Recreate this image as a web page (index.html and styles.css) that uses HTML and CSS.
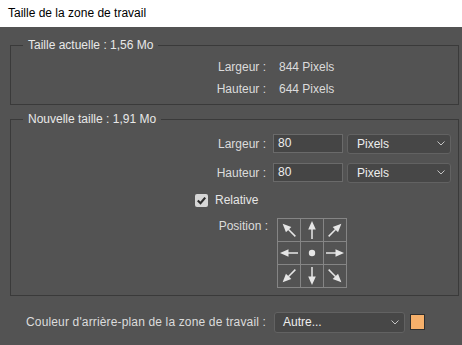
FILE: index.html
```html
<!DOCTYPE html>
<html lang="fr">
<head>
<meta charset="utf-8">
<title>Taille de la zone de travail</title>
<link rel="stylesheet" href="styles.css">
</head>
<body>
<div class="titlebar">Taille de la zone de travail</div>
<main class="dialog">
  <fieldset class="group group-current">
    <legend>Taille actuelle : 1,56 Mo</legend>
    <div class="info-row"><span class="lbl">Largeur :</span><span class="val">844 Pixels</span></div>
    <div class="info-row"><span class="lbl">Hauteur :</span><span class="val">644 Pixels</span></div>
  </fieldset>
  <fieldset class="group group-new">
    <legend>Nouvelle taille : 1,91 Mo</legend>
    <div class="field-row">
      <span class="lbl">Largeur :</span>
      <div class="input">80</div>
      <div class="select select-unit"><span>Pixels</span><svg class="chev" width="8" height="5" viewBox="0 0 8 5"><polyline points="0.5,0.5 4,4 7.5,0.5" fill="none" stroke="#c4c4c4" stroke-width="1"/></svg></div>
    </div>
    <div class="field-row">
      <span class="lbl">Hauteur :</span>
      <div class="input">80</div>
      <div class="select select-unit"><span>Pixels</span><svg class="chev" width="8" height="5" viewBox="0 0 8 5"><polyline points="0.5,0.5 4,4 7.5,0.5" fill="none" stroke="#c4c4c4" stroke-width="1"/></svg></div>
    </div>
    <div class="check-row">
      <span class="checkbox"><svg width="13" height="13" viewBox="0 0 13 13"><polyline points="2.8,6.5 5.5,9.2 10.2,3.6" fill="none" stroke="#2e2e2e" stroke-width="2.2"/></svg></span>
      <span class="check-label">Relative</span>
    </div>
    <div class="pos-row">
      <span class="lbl lbl-pos">Position :</span>
      <svg class="anchor" width="70" height="70" viewBox="0 0 70 70">
        <g stroke="#858585" stroke-width="1" fill="none">
          <rect x="0.5" y="0.5" width="69" height="69"/>
          <line x1="23.5" y1="0" x2="23.5" y2="70"/>
          <line x1="46.5" y1="0" x2="46.5" y2="70"/>
          <line x1="0" y1="23.5" x2="70" y2="23.5"/>
          <line x1="0" y1="46.5" x2="70" y2="46.5"/>
        </g>
        <defs>
          <g id="arr">
            <path d="M0,-9 L-3.8,-0.5 L3.8,-0.5 Z" fill="#e6e6e6"/>
            <line x1="0" y1="-1" x2="0" y2="9" stroke="#e6e6e6" stroke-width="1.5"/>
          </g>
        </defs>
        <use href="#arr" transform="translate(12,12) rotate(-45)"/>
        <use href="#arr" transform="translate(35,12)"/>
        <use href="#arr" transform="translate(58,12) rotate(45)"/>
        <use href="#arr" transform="translate(12,35) rotate(-90)"/>
        <circle cx="35" cy="35" r="3.2" fill="#e6e6e6"/>
        <use href="#arr" transform="translate(58,35) rotate(90)"/>
        <use href="#arr" transform="translate(12,58) rotate(-135)"/>
        <use href="#arr" transform="translate(35,58) rotate(180)"/>
        <use href="#arr" transform="translate(58,58) rotate(135)"/>
      </svg>
    </div>
  </fieldset>
  <div class="bg-row">
    <span class="bg-label">Couleur d'arrière-plan de la zone de travail :</span>
    <div class="select select-bg"><span>Autre...</span><svg class="chev" width="8" height="5" viewBox="0 0 8 5"><polyline points="0.5,0.5 4,4 7.5,0.5" fill="none" stroke="#c4c4c4" stroke-width="1"/></svg></div>
    <span class="swatch"></span>
  </div>
</main>
</body>
</html>
```
FILE: styles.css
```css
html, body {
  margin: 0;
  padding: 0;
  background: #535353;
  width: 462px;
  height: 345px;
  overflow: hidden;
  font-family: "Liberation Sans", Arial, sans-serif;
  font-size: 12px;
  color: #e6e6e6;
}

.titlebar {
  height: 27px;
  line-height: 26px;
  background: #ffffff;
  color: #000000;
  padding-left: 8px;
}

.dialog {
  padding: 10px 3px 0 10px;
}

.group {
  margin: 0;
  padding: 0;
  border: 1px solid #3a3a3a;
  width: 449px;
  box-sizing: border-box;
  min-width: 0;
}

.group legend {
  margin-left: 12px;
  padding: 0 5px;
  line-height: 16px;
  color: #e8e8e8;
}

.group-current {
  padding: 3px 0 4px 0;
}

.group-new {
  margin-top: 6px;
  padding: 6px 0 7px 0;
}

.info-row {
  display: flex;
  align-items: center;
  height: 22px;
}

.lbl {
  width: 255px;
  text-align: right;
  color: #dcdcdc;
  flex: none;
}

.val {
  margin-left: 13px;
  color: #dcdcdc;
}

.field-row {
  display: flex;
  align-items: center;
  height: 21px;
  margin-bottom: 8px;
}

.field-row + .field-row {
  margin-bottom: 7px;
}

.input {
  margin-left: 7px;
  width: 70px;
  height: 19px;
  box-sizing: border-box;
  background: #454545;
  border: 1px solid #6a6a6a;
  padding-left: 4px;
  line-height: 17px;
  color: #eeeeee;
}

.select {
  display: flex;
  align-items: center;
  justify-content: space-between;
  box-sizing: border-box;
  background: #474747;
  border: 1px solid #626262;
  border-radius: 3px;
  color: #eeeeee;
}

.select-unit {
  margin-left: 4px;
  width: 104px;
  height: 20px;
  padding: 0 5px 0 9px;
}

.chev {
  display: block;
}

.check-row {
  display: flex;
  align-items: center;
  height: 20px;
  padding-left: 184px;
}

.checkbox {
  width: 13px;
  height: 13px;
  background: #d6d6d6;
  border-radius: 2px;
  display: block;
}

.checkbox svg {
  display: block;
}

.check-label {
  margin-left: 7px;
  color: #e6e6e6;
}

.pos-row {
  display: flex;
  align-items: flex-start;
  margin-top: 8px;
}

.lbl-pos {
  width: 257px;
  line-height: 16px;
}

.anchor {
  display: block;
  margin-left: 9px;
}

.bg-row {
  display: flex;
  align-items: center;
  margin-top: 16px;
  height: 20px;
  padding-left: 16px;
}

.bg-label {
  width: 248px;
  color: #dcdcdc;
  letter-spacing: 0.15px;
  white-space: nowrap;
}

.select-bg {
  width: 131px;
  height: 21px;
  padding: 0 5px 0 8px;
}

.swatch {
  margin-left: 5px;
  width: 15px;
  height: 16px;
  box-sizing: border-box;
  background: #f6b06b;
  border: 1px solid #2e2e2e;
}
```
